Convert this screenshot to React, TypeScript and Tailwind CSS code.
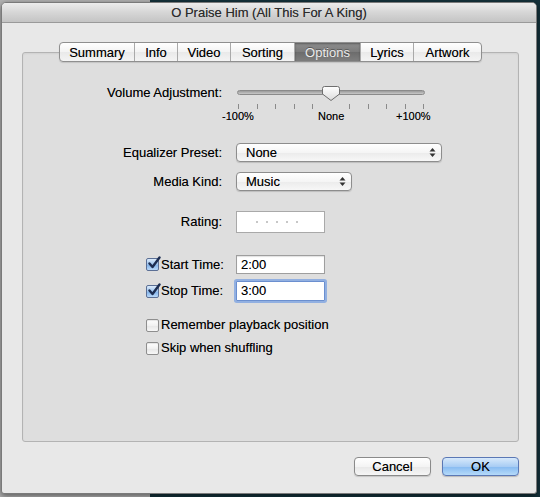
import React from "react";

const font = { fontFamily: '"Liberation Sans", Arial, sans-serif' };

function Arrows() {
  return (
    <svg width="7" height="11" viewBox="0 0 7 11" className="shrink-0">
      <path d="M3.5 1 L6.5 4.5 L0.5 4.5 Z" fill="#333" />
      <path d="M3.5 10 L6.5 6.5 L0.5 6.5 Z" fill="#333" />
    </svg>
  );
}

function Check({ checked }: { checked: boolean }) {
  if (checked) {
    return (
      <div className="relative w-[13px] h-[13px] shrink-0 rounded-[2px] border border-[#5b6f95] bg-[linear-gradient(#dcebfb,#9cc3ee_50%,#7fb1ea_51%,#b9d8f8)]">
        <svg width="14" height="14" viewBox="0 0 14 14" className="absolute left-[0px] top-[-3px]">
          <path d="M2.5 7.5 L5.5 11 L12.5 1.5" fill="none" stroke="#1d2e52" strokeWidth="2.4" strokeLinecap="round" strokeLinejoin="round" />
        </svg>
      </div>
    );
  }
  return (
    <div className="w-[13px] h-[13px] shrink-0 rounded-[2px] border border-[#8e8e8e] bg-[linear-gradient(#ffffff,#f1f1f1_50%,#e6e6e6_51%,#f7f7f7)] shadow-[inset_0_1px_1px_rgba(0,0,0,0.1)]" />
  );
}

const tabs = [
  { t: "Summary", w: 75 },
  { t: "Info", w: 43 },
  { t: "Video", w: 53 },
  { t: "Sorting", w: 64 },
  { t: "Options", w: 66, sel: true },
  { t: "Lyrics", w: 53 },
  { t: "Artwork", w: 69 },
];

export default function App() {
  const ticks = Array.from({ length: 11 }, (_, i) => i);
  return (
    <div
      className="w-[540px] h-[497px] overflow-hidden bg-[linear-gradient(to_right,#b2b2b2_150px,#14313a_150px)] pt-[2px] pl-[1px]"
      style={font}
    >
      <div className="w-[536px] h-[492px] flex flex-col rounded-t-[5px] rounded-b-[3px] border border-[#7a7a7a] bg-[#e8e8e8] overflow-hidden shadow-[0_2px_6px_rgba(0,0,0,0.5)] [text-shadow:0_0_0.5px_rgba(0,0,0,0.45)]">
        {/* title bar */}
        <div className="h-[20px] shrink-0 flex items-center justify-center border-b border-[#9a9a9a] bg-[linear-gradient(#ececec,#d6d6d6_50%,#c4c4c4)]">
          <span className="text-[13px] text-[#2c2c2c] leading-none">O Praise Him (All This For A King)</span>
        </div>

        {/* body */}
        <div className="flex-1 flex flex-col pt-[19px] pl-[20px] pr-[17px]">
          {/* tabs */}
          <div className="flex justify-center relative z-10 h-[20px]">
            <div className="flex h-[20px] rounded-[4px] border border-[#8f8f8f] overflow-hidden bg-[linear-gradient(#ffffff,#f3f3f3_50%,#e9e9e9_51%,#f4f4f4)] shadow-[0_1px_1px_rgba(0,0,0,0.12)]">
              {tabs.map((tab, i) => (
                <div
                  key={tab.t}
                  className={
                    "flex items-center justify-center text-[13px] leading-none " +
                    (i > 0 ? "border-l border-[#a9a9a9] " : "") +
                    (tab.sel
                      ? "bg-[linear-gradient(#8e8e8e,#7b7b7b_50%,#6c6c6c_51%,#7e7e7e)] text-[#ececec] shadow-[inset_0_1px_2px_rgba(0,0,0,0.35)] [text-shadow:0_-1px_0_rgba(0,0,0,0.35)]"
                      : "text-[#000]")
                  }
                  style={{ width: tab.w - (i === 0 || i === tabs.length - 1 ? 1 : 0) }}
                >
                  {tab.t}
                </div>
              ))}
            </div>
          </div>

          {/* group box */}
          <div className="-mt-[10px] h-[390px] rounded-[3px] border border-[#b3b3b3] bg-[#dedede] shadow-[inset_0_1px_2px_rgba(0,0,0,0.06)] flex flex-col pt-[32px] text-[13px] text-[#000]">
            {/* volume */}
            <div className="flex">
              <div className="w-[199px] h-[16px] flex items-center justify-end">Volume Adjustment:</div>
              <div className="ml-[14px] w-[190px] flex flex-col">
                <div className="relative h-[16px]">
                  <div className="absolute left-[1px] right-[1px] top-[5px] h-[5px] rounded-full border border-[#8a8a8a] bg-[linear-gradient(#9a9a9a,#c8c8c8)]" />
                  <svg width="20" height="17" viewBox="0 0 20 17" className="absolute left-[85px] top-[0px]">
                    <defs>
                      <linearGradient id="kg" x1="0" y1="0" x2="0" y2="1">
                        <stop offset="0" stopColor="#ffffff" />
                        <stop offset="1" stopColor="#dcdcdc" />
                      </linearGradient>
                    </defs>
                    <path d="M3.5 1.5 H16.5 Q18.5 1.5 18.5 3.5 V9 L10 15.5 L1.5 9 V3.5 Q1.5 1.5 3.5 1.5 Z" fill="url(#kg)" stroke="#6f6f6f" strokeWidth="1" />
                  </svg>
                </div>
                <div className="flex justify-between px-[2px] h-[6px] mt-[3px]">
                  {ticks.map((i) => (
                    <div key={i} className={"w-[1px] h-[5px] " + (i === 5 ? "bg-transparent" : "bg-[#8a8a8a]")} />
                  ))}
                </div>
                <div className="relative h-[13px] text-[11px] leading-[13px]">
                  <span className="absolute left-[-14px]">-100%</span>
                  <span className="absolute left-[82px]">None</span>
                  <span className="absolute left-[160px]">+100%</span>
                </div>
              </div>
            </div>

            {/* equalizer */}
            <div className="flex mt-[20px] h-[19px] items-center">
              <div className="w-[199px] text-right">Equalizer Preset:</div>
              <div className="ml-[14px] w-[206px] h-[19px] rounded-[4px] border border-[#8d8d8d] bg-[linear-gradient(#ffffff,#f5f5f5_50%,#ebebeb_51%,#f7f7f7)] shadow-[0_1px_1px_rgba(0,0,0,0.15)] flex items-center justify-between pl-[9px] pr-[5px]">
                <span>None</span>
                <Arrows />
              </div>
            </div>

            {/* media kind */}
            <div className="flex mt-[10px] h-[19px] items-center">
              <div className="w-[199px] text-right">Media Kind:</div>
              <div className="ml-[14px] w-[116px] h-[19px] rounded-[4px] border border-[#8d8d8d] bg-[linear-gradient(#ffffff,#f5f5f5_50%,#ebebeb_51%,#f7f7f7)] shadow-[0_1px_1px_rgba(0,0,0,0.15)] flex items-center justify-between pl-[9px] pr-[5px]">
                <span>Music</span>
                <Arrows />
              </div>
            </div>

            {/* rating */}
            <div className="flex mt-[20px] h-[22px] items-center">
              <div className="w-[199px] text-right">Rating:</div>
              <div className="ml-[14px] w-[89px] h-[22px] border border-[#a9a9a9] bg-white flex items-center pl-[19px] gap-[8px]">
                {[0, 1, 2, 3, 4].map((i) => (
                  <div key={i} className="w-[2px] h-[2px] rounded-full bg-[#b5b5b5]" />
                ))}
              </div>
            </div>

            {/* start time */}
            <div className="flex mt-[22px] h-[19px] items-center pl-[123px]">
              <div className="w-[90px] flex items-center gap-[2px]">
                <Check checked />
                <span>Start Time:</span>
              </div>
              <div className="w-[89px] h-[19px] border border-[#9e9e9e] bg-white flex items-center pl-[4px] shadow-[inset_0_1px_1px_rgba(0,0,0,0.12)]">
                2:00
              </div>
            </div>

            {/* stop time */}
            <div className="flex mt-[7px] h-[20px] items-center pl-[123px]">
              <div className="w-[90px] flex items-center gap-[2px]">
                <Check checked />
                <span>Stop Time:</span>
              </div>
              <div className="w-[89px] h-[20px] border border-[#6b8fcf] bg-white flex items-center pl-[4px] shadow-[0_0_0_2px_rgba(120,160,225,0.75)] rounded-[1px]">
                3:00
              </div>
            </div>

            {/* remember */}
            <div className="flex mt-[17px] h-[14px] items-center pl-[123px] gap-[2px]">
              <Check checked={false} />
              <span>Remember playback position</span>
            </div>

            {/* skip */}
            <div className="flex mt-[9px] h-[14px] items-center pl-[123px] gap-[2px]">
              <Check checked={false} />
              <span>Skip when shuffling</span>
            </div>
          </div>

          {/* buttons */}
          <div className="flex justify-end gap-[11px] mt-[15px] text-[13px] text-[#000]">
            <div className="w-[77px] h-[19px] rounded-[4px] border border-[#8a8a8a] bg-[linear-gradient(#ffffff,#f4f4f4_50%,#e8e8e8_51%,#f6f6f6)] shadow-[0_1px_1px_rgba(0,0,0,0.15)] flex items-center justify-center">
              Cancel
            </div>
            <div className="w-[77px] h-[19px] rounded-[4px] border border-[#5b78b5] bg-[linear-gradient(#d7e9fb,#a9cdf4_50%,#86baf1_51%,#b5daf9)] shadow-[0_1px_1px_rgba(0,0,0,0.2)] flex items-center justify-center">
              OK
            </div>
          </div>
        </div>
      </div>
    </div>
  );
}
